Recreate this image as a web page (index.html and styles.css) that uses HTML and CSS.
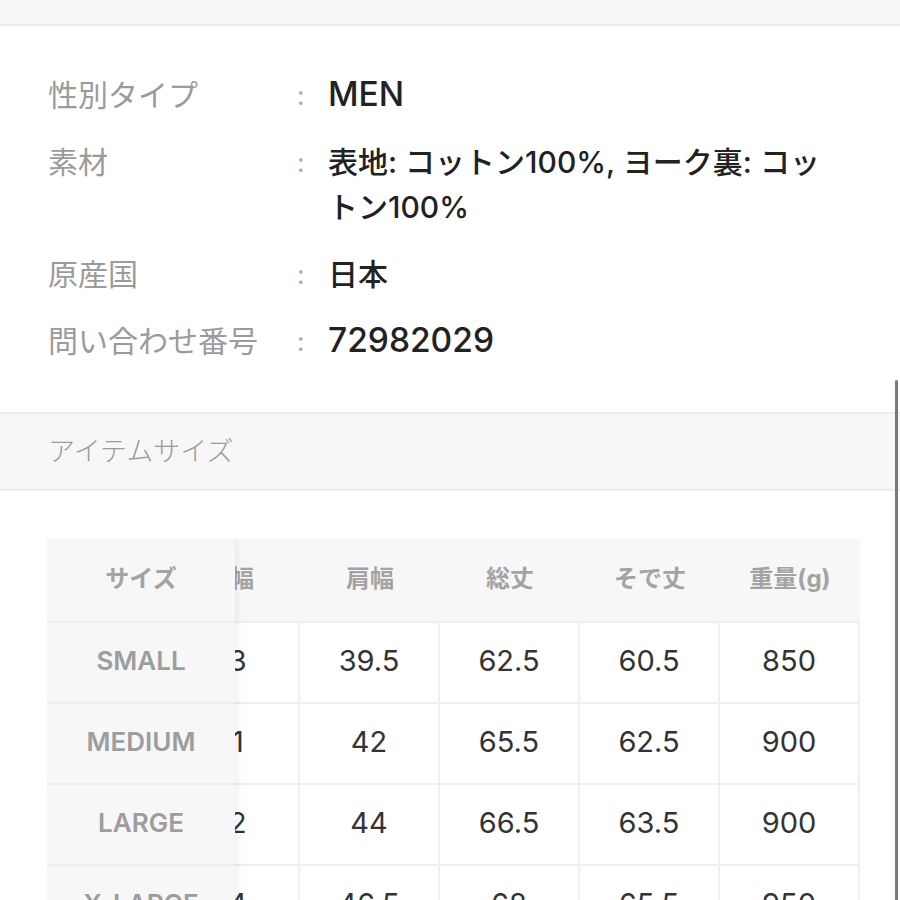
FILE: index.html
```html
<!DOCTYPE html>
<html lang="ja">
<head>
<meta charset="utf-8">
<title>商品詳細</title>
<link rel="stylesheet" href="styles.css">
</head>
<body>
<div class="topbar"></div>

<dl class="specs">
  <div class="spec">
    <dt>性別タイプ</dt><span class="colon">:</span>
    <dd><span class="lat">MEN</span></dd>
  </div>
  <div class="spec">
    <dt>素材</dt><span class="colon">:</span>
    <dd>表地: コットン100%, ヨーク裏: コットン100%</dd>
  </div>
  <div class="spec">
    <dt>原産国</dt><span class="colon">:</span>
    <dd>日本</dd>
  </div>
  <div class="spec">
    <dt>問い合わせ番号</dt><span class="colon">:</span>
    <dd><span class="lat">72982029</span></dd>
  </div>
</dl>

<div class="section-head">アイテムサイズ</div>

<div class="size-table">
  <div class="sticky-col">
    <div class="sticky-head">サイズ</div>
    <div class="sticky-cell">SMALL</div>
    <div class="sticky-cell">MEDIUM</div>
    <div class="sticky-cell">LARGE</div>
    <div class="sticky-cell">X-LARGE</div>
  </div>
  <div class="scroll-area">
    <div class="grid">
      <div class="th">身幅</div><div class="th">肩幅</div><div class="th">総丈</div><div class="th">そで丈</div><div class="th">重量(g)</div>
      <div class="td">53</div><div class="td">39.5</div><div class="td">62.5</div><div class="td">60.5</div><div class="td">850</div>
      <div class="td">51</div><div class="td">42</div><div class="td">65.5</div><div class="td">62.5</div><div class="td">900</div>
      <div class="td">52</div><div class="td">44</div><div class="td">66.5</div><div class="td">63.5</div><div class="td">900</div>
      <div class="td">54</div><div class="td">46.5</div><div class="td">68</div><div class="td">65.5</div><div class="td">950</div>
    </div>
  </div>
</div>

<div class="scroll-indicator"></div>
</body>
</html>
```

FILE: styles.css
```css
html, body {
  margin: 0;
  padding: 0;
}
body {
  width: 900px;
  height: 900px;
  overflow: hidden;
  position: relative;
  background: #ffffff;
  font-family: Inter, "Noto Sans CJK JP", sans-serif;
}

.topbar {
  height: 24px;
  background: #f7f7f7;
  border-bottom: 2px solid #ececec;
}

.specs {
  margin: 0;
  padding: 47px 56px 0 48px;
  display: flex;
  flex-direction: column;
  gap: 22px;
}
.spec {
  display: grid;
  grid-template-columns: 249px 31px 1fr;
  line-height: 45px;
}
.spec dt {
  font-size: 30px;
  color: #9b9b9b;
  font-weight: 400;
  white-space: nowrap;
}
.colon {
  font-size: 26px;
  color: #ababab;
}
.spec dd {
  margin: 0;
  font-size: 30px;
  color: #222222;
  font-weight: 500;
}
.lat {
  font-size: 33.5px;
  line-height: 1;
}

.section-head {
  margin-top: 48px;
  box-sizing: border-box;
  height: 79px;
  background: #f7f7f7;
  border-top: 2px solid #ececec;
  border-bottom: 2px solid #ececec;
  display: flex;
  align-items: center;
  padding: 0 0 4px 48px;
  font-size: 27px;
  font-weight: 300;
  color: #9a9a9a;
}

.size-table {
  margin: 48px 0 0 47px;
  display: flex;
  width: 813px;
}
.sticky-col {
  width: 188px;
  flex: none;
  background: #f7f7f7;
  position: relative;
  z-index: 1;
  box-shadow: 4px 0 7px -2px rgba(0, 0, 0, 0.07);
}
.sticky-head {
  box-sizing: border-box;
  height: 82px;
  padding-bottom: 8px;
  display: flex;
  align-items: center;
  justify-content: center;
  font-size: 24px;
  font-weight: 700;
  color: #a3a3a3;
}
.sticky-cell {
  box-sizing: border-box;
  height: 81px;
  padding-bottom: 5px;
  border-top: 2px solid #efefef;
  display: flex;
  align-items: center;
  justify-content: center;
  font-size: 26px;
  font-weight: 600;
  color: #9d9d9d;
}

.scroll-area {
  width: 625px;
  overflow: hidden;
}
.grid {
  display: grid;
  grid-template-columns: repeat(5, 140px);
  width: 700px;
  margin-left: -75px;
}
.th {
  box-sizing: border-box;
  height: 82px;
  padding-bottom: 8px;
  background: #f7f7f7;
  display: flex;
  align-items: center;
  justify-content: center;
  font-size: 24px;
  font-weight: 700;
  color: #a3a3a3;
}
.td {
  box-sizing: border-box;
  height: 81px;
  padding-bottom: 5px;
  border-top: 2px solid #efefef;
  border-right: 2px solid #efefef;
  display: flex;
  align-items: center;
  justify-content: center;
  font-size: 29px;
  color: #333333;
}

.scroll-indicator {
  position: absolute;
  left: 895px;
  top: 380px;
  width: 3px;
  height: 560px;
  border-radius: 2px;
  background: #7a7a7a;
}
```
